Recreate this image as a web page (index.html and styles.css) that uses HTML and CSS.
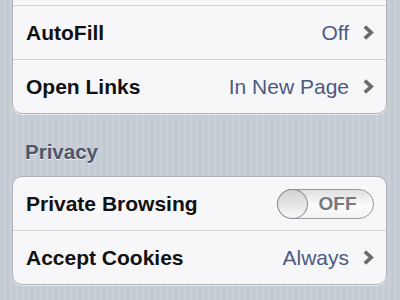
FILE: index.html
```html
<!DOCTYPE html>
<html>
<head>
<meta charset="utf-8">
<link rel="stylesheet" href="styles.css">
</head>
<body>
<div class="page">
  <div class="group group-first">
    <div class="row"></div>
    <div class="row">
      <span class="label">AutoFill</span>
      <span class="value">Off</span>
      <svg class="chev" width="11" height="15" viewBox="0 0 11 15"><path d="M1.8 1.6 L8.2 7.5 L1.8 13.4" fill="none" stroke="#6b6b6e" stroke-width="3.6"/></svg>
    </div>
    <div class="row">
      <span class="label">Open Links</span>
      <span class="value">In New Page</span>
      <svg class="chev" width="11" height="15" viewBox="0 0 11 15"><path d="M1.8 1.6 L8.2 7.5 L1.8 13.4" fill="none" stroke="#6b6b6e" stroke-width="3.6"/></svg>
    </div>
  </div>
  <div class="header">Privacy</div>
  <div class="group">
    <div class="row">
      <span class="label">Private Browsing</span>
      <div class="toggle">
        <span class="knob"></span>
        <span class="toggle-text">OFF</span>
      </div>
    </div>
    <div class="row">
      <span class="label">Accept Cookies</span>
      <span class="value">Always</span>
      <svg class="chev" width="11" height="15" viewBox="0 0 11 15"><path d="M1.8 1.6 L8.2 7.5 L1.8 13.4" fill="none" stroke="#6b6b6e" stroke-width="3.6"/></svg>
    </div>
  </div>
</div>
</body>
</html>
```
FILE: styles.css
```css
html, body {
  margin: 0;
  padding: 0;
}
body {
  width: 400px;
  height: 300px;
  overflow: hidden;
  background-color: #c6ccd4;
  background-image: repeating-linear-gradient(90deg, #c5cbd3 0 4px, #cad0d8 4px 6px);
  font-family: "Liberation Sans", Arial, sans-serif;
}
.page {
  padding: 0 13px 0 12px;
}
.group {
  background: #f7f7f9;
  border: 1px solid #aeb1b7;
  border-radius: 10px;
  box-shadow: 0 1px 0 rgba(255,255,255,0.6);
  overflow: hidden;
}
.group-first {
  margin-top: -49px;
}
.row {
  height: 53px;
  display: flex;
  align-items: center;
  padding: 0 13px 0 13px;
  border-top: 1px solid #d2d2d6;
}
.row:first-child {
  border-top: none;
}
.label {
  font-size: 21px;
  font-weight: bold;
  color: #111111;
  flex: 1;
}
.value {
  font-size: 21px;
  color: #4c5a80;
  margin-right: 14px;
}
.chev {
  display: block;
  margin-right: -1px;
}
.header {
  height: 62px;
  box-sizing: border-box;
  padding: 26px 0 0 13px;
  font-size: 20.5px;
  font-weight: bold;
  color: #4d576b;
  text-shadow: 0 1px 0 rgba(255,255,255,0.7);
}
.toggle {
  width: 97px;
  height: 30px;
  box-sizing: border-box;
  border: 1px solid #9a9a9e;
  border-radius: 15px;
  background: linear-gradient(#e0e0e2, #fbfbfb 55%, #f4f4f4);
  display: flex;
  align-items: center;
  margin-right: -1px;
}
.knob {
  width: 31px;
  height: 30px;
  box-sizing: border-box;
  margin-left: -1px;
  border: 1px solid #8a8a8e;
  border-radius: 50%;
  background: linear-gradient(#d2d2d4, #f8f8f8);
}
.toggle-text {
  flex: 1;
  text-align: center;
  font-size: 19px;
  font-weight: bold;
  color: #7a7a7d;
  padding-right: 6px;
}
```
